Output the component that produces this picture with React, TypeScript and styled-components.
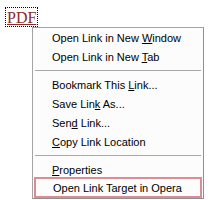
import React from 'react'
import styled, { createGlobalStyle } from 'styled-components'

const Global = createGlobalStyle`
  html, body {
    margin: 0;
    padding: 0;
    background: #ffffff;
  }
`

const Page = styled.div`
  display: flex;
  flex-direction: column;
  align-items: flex-start;
  padding: 7px 0 0 5px;
  width: 214px;
  height: 200px;
  box-sizing: border-box;
`

const PdfLink = styled.a`
  display: block;
  height: 18px;
  padding: 0 1px;
  border: 1px dotted #000;
  font-family: 'Liberation Serif', serif;
  font-size: 16px;
  line-height: 19px;
  color: #8c2a2a;
  text-decoration: underline;
`

const Menu = styled.div`
  display: flex;
  flex-direction: column;
  width: 172px;
  margin-left: 27px;
  box-sizing: border-box;
  background: #fcfcfc;
  border: 1px solid #a4a4a4;
  border-right-color: #8f8f8f;
  border-bottom-color: #8f8f8f;
  font-family: 'Liberation Sans', Arial, sans-serif;
  font-size: 11px;
  color: #000;
`

const Item = styled.div<{ $marked?: boolean }>`
  display: flex;
  align-items: center;
  height: 19px;
  padding-left: 19px;
  box-sizing: border-box;
  white-space: pre;
  ${p =>
    p.$marked &&
    `
    height: 21px;
    margin: -2px 1px 0 1px;
    padding-left: 17px;
    border: 2px solid #dc8c92;
  `}
`

const Label = styled.span`
  white-space: pre;
`

const Key = styled.span`
  text-decoration: underline;
`

const Separator = styled.div`
  height: 1px;
  margin: 4px 2px;
  background: #a8a8a8;
`

export default function App() {
  return (
    <>
      <Global />
      <Page>
        <PdfLink>PDF</PdfLink>
        <Menu>
          <Item><Label>Open Link in New <Key>W</Key>indow</Label></Item>
          <Item><Label>Open Link in New <Key>T</Key>ab</Label></Item>
          <Separator />
          <Item><Label>Bookmark This <Key>L</Key>ink...</Label></Item>
          <Item><Label>Save Lin<Key>k</Key> As...</Label></Item>
          <Item><Label>Sen<Key>d</Key> Link...</Label></Item>
          <Item><Label><Key>C</Key>opy Link Location</Label></Item>
          <Separator />
          <Item><Label><Key>P</Key>roperties</Label></Item>
          <Item $marked><Label>Open Link Target in Opera</Label></Item>
        </Menu>
      </Page>
    </>
  )
}
